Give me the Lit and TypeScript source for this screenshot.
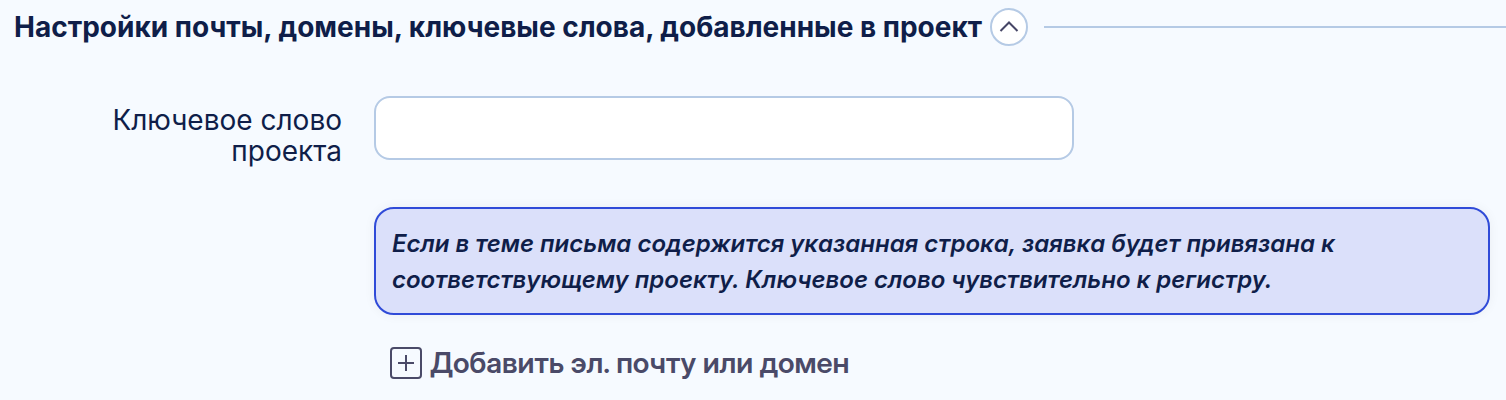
import { LitElement, html, css } from "lit";
import { customElement, state } from "lit/decorators.js";

@customElement("app-root")
export class AppRoot extends LitElement {
  @state() private open = true;

  static styles = css`
    :host {
      display: block;
      min-height: 100vh;
      box-sizing: border-box;
      padding: 8px 0 16px 14px;
      background: #f6faff;
      color: #0f1e49;
      font-family: Inter, "Liberation Sans", sans-serif;
      font-size: 28px;
      line-height: 31px;
    }
    * { box-sizing: border-box; }
    .header { display: flex; align-items: center; gap: 16px; }
    .heading { display: flex; align-items: center; gap: 8px; }
    .title { margin: 0; font-size: 28px; line-height: 38px; font-weight: 700; }
    .toggle {
      flex: none; display: flex; align-items: center; justify-content: center;
      width: 38px; height: 38px; padding: 0; border: 2px solid #b5cae5;
      border-radius: 50%; background: #fff; color: #464666;
    }
    .rule { flex: 1; height: 2px; background: #b5cae5; }
    .form {
      display: grid; grid-template-columns: 328px minmax(0, 1fr);
      column-gap: 32px; margin-top: 50px; padding-right: 16px;
    }
    .label { padding: 9px 0 0 80px; text-align: right; }
    .input {
      display: block; width: 700px; max-width: 100%; height: 64px; padding: 0 16px;
      border: 2px solid #b5cae5; border-radius: 16px; background: #fff;
      color: inherit; font: inherit;
    }
    .note {
      margin: 47px 0 0; padding: 17px 16px 15px; border: 2px solid #304bd8; border-radius: 20px;
      background: #dbe0fa; box-shadow: 0 0 12px rgba(0, 0, 0, 0.05);
      font-size: 24px; line-height: 36px; font-weight: 600; font-style: italic;
    }
    .add {
      display: flex; align-items: center; gap: 8px; margin: 30px 0 0 16px; padding: 0;
      border: 0; background: none; color: #4a4a68;
      font-family: "Inter Display", Inter, sans-serif; font-size: 29px; font-weight: 600; line-height: 36px;
    }
    svg { display: block; flex: none; }
  `;

  render() {
    return html`
      <div class="header">
        <div class="heading">
          <h2 class="title">Настройки почты, домены, ключевые слова, добавленные в проект</h2>
          <button class="toggle" type="button" aria-label="Свернуть" aria-expanded=${this.open}
            @click=${() => (this.open = !this.open)}>
            <svg width="20" height="12" viewBox="0 0 20 12" fill="none" stroke="currentColor" stroke-width="2">
              <path d=${this.open ? "M1.5 10L10 1.5l8.500 8.500" : "M1.500 1.500L10 10l8.500-8.500"} />
            </svg>
          </button>
        </div>
        <span class="rule"></span>
      </div>
      ${this.open
        ? html`<div class="form">
            <label class="label" for="keyword">Ключевое слово проекта</label>
            <div>
              <input class="input" id="keyword" type="text" aria-describedby="hint" />
              <p class="note" id="hint">Если в теме письма содержится указанная строка, заявка будет привязана к соответствующему проекту. Ключевое слово чувствительно к регистру.</p>
              <button class="add" type="button">
                <svg width="32" height="32" viewBox="0 0 32 32" fill="none" stroke="currentColor" stroke-width="2">
                  <rect x="1" y="1" width="30" height="30" rx="3" />
                  <path d="M16 8v16M8 16h16" />
                </svg>
                Добавить эл. почту или домен
              </button>
            </div>
          </div>`
        : null}
    `;
  }
}
